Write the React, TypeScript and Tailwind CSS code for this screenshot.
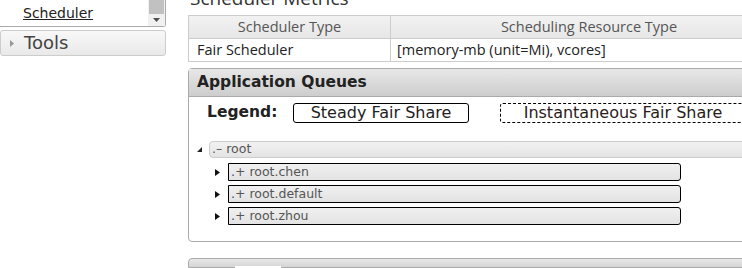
const queues = ["root.chen", "root.default", "root.zhou"];

function Sidebar() {
  return (
    <div className="w-[166px] shrink-0 font-['DejaVu_Sans',sans-serif]">
      <div className="h-[27px] flex border-r border-b border-[#aaa] rounded-br-[3px] bg-white">
        <div className="flex-1 pl-[23px] pt-[1px]">
          <a className="text-[14px] text-[#222] underline leading-[18px]">Scheduler</a>
        </div>
        <div className="w-[17px] bg-[#f1f1f1] flex flex-col">
          <div className="h-[14px] mx-[1px] bg-[#c1c1c1]" />
          <div className="flex-1 flex items-center justify-center">
            <svg width="7" height="4" viewBox="0 0 7 4">
              <path d="M0 0h7L3.5 4z" fill="#505050" />
            </svg>
          </div>
        </div>
      </div>
      <div className="mt-[3px] h-[26px] flex items-center border border-[#ccc] rounded-[3px] bg-gradient-to-b from-[#f8f8f8] to-[#e9e9e9]">
        <svg className="ml-[9px] mr-[10px]" width="4" height="7" viewBox="0 0 4 7">
          <path d="M0 0l4 3.5L0 7z" fill="#999" />
        </svg>
        <span className="text-[18px] text-[#444] leading-none">Tools</span>
      </div>
    </div>
  );
}

function MetricsTable() {
  return (
    <div className="font-['Open_Sans',sans-serif]">
      <div className="mt-[-11px] h-[26px] pl-[2px] text-[19px] text-[#333] leading-[18px]">
        Scheduler Metrics
      </div>
      <table className="w-[600px] border-collapse text-[14.5px] text-[#222]">
        <thead>
          <tr className="h-[23px] bg-gradient-to-b from-[#f2f2f2] to-[#e6e6e6] text-[#555]">
            <th className="w-[202px] font-normal border border-[#ccc] leading-none">Scheduler Type</th>
            <th className="font-normal border border-[#ccc] leading-none">Scheduling Resource Type</th>
          </tr>
        </thead>
        <tbody>
          <tr className="h-[23px]">
            <td className="pl-[8px] border-l border-b border-[#ccc] leading-none">Fair Scheduler</td>
            <td className="pl-[6px] border-l border-b border-[#ccc] leading-none">[memory-mb (unit=Mi), vcores]</td>
          </tr>
        </tbody>
      </table>
    </div>
  );
}

function QueueBar({ name, child }: { name: string; child?: boolean }) {
  return (
    <div className="flex items-center h-[22px]">
      <div className={child ? "w-[39px] pl-[26px]" : "w-[20px] pl-[8px]"}>
        {child ? (
          <svg width="5" height="7" viewBox="0 0 5 7">
            <path d="M0 0l5 3.5L0 7z" fill="#111" />
          </svg>
        ) : (
          <svg width="5" height="5" viewBox="0 0 5 5">
            <path d="M5 0v5H0z" fill="#222" />
          </svg>
        )}
      </div>
      <div
        className={
          child
            ? "w-[453px] h-[18px] flex items-center border-[1.5px] border-black rounded-r-[3px] bg-gradient-to-b from-[#f0f0f0] to-[#e3e3e3]"
            : "flex-1 h-[17px] flex items-center border border-[#ccc] rounded-l-[4px] bg-gradient-to-b from-[#f2f2f2] to-[#e4e4e4]"
        }
      >
        <span className="pl-[2px] text-[12.5px] text-[#555] leading-none">
          <span className={child ? "text-[#2a4a7a]" : ""}>.</span>
          {child ? "+" : "–"} {name}
        </span>
      </div>
    </div>
  );
}

function ApplicationQueues() {
  return (
    <div className="mt-[6px] w-[600px] border border-[#aaa] rounded-tl-[4px] rounded-bl-[4px] font-['DejaVu_Sans',sans-serif]">
      <div className="h-[28px] flex items-center pl-[8px] border-b border-[#aaa] bg-gradient-to-b from-[#e8e8e8] to-[#cdcdcd]">
        <span className="text-[15.5px] font-bold text-[#222] leading-none">Application Queues</span>
      </div>
      <div className="pt-[6px] pb-[14px]">
        <div className="flex items-center h-[20px] pl-[18px] text-[#222]">
          <span className="w-[86px] text-[15.5px] font-bold leading-none">Legend:</span>
          <div className="w-[176px] h-[20px] flex items-center justify-center border border-black rounded-[3px] text-[16px] leading-none">
            Steady Fair Share
          </div>
          <div className="ml-[31px] w-[246px] h-[20px] flex items-center justify-center border border-dashed border-black rounded-[3px] text-[16px] leading-none text-[#2a1a1a]">
            Instantaneous Fair Share
          </div>
        </div>
        <div className="mt-[15px]">
          <QueueBar name="root" />
          <div className="mt-[1px]">
            {queues.map((q) => (
              <QueueBar key={q} name={q} child />
            ))}
          </div>
        </div>
      </div>
    </div>
  );
}

export default function App() {
  return (
    <div className="w-[742px] h-[268px] overflow-hidden bg-white flex">
      <Sidebar />
      <div className="ml-[22px] flex flex-col">
        <MetricsTable />
        <ApplicationQueues />
        <div className="mt-[16px] w-[600px] h-[20px] border border-[#aaa] rounded-tl-[4px] bg-gradient-to-b from-[#e8e8e8] to-[#d5d5d5] relative">
          <div className="absolute left-[46px] top-[7px] w-[46px] h-[14px] bg-white" />
        </div>
      </div>
    </div>
  );
}
